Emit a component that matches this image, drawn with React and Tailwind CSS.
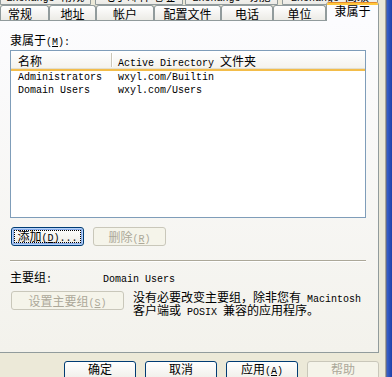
import React from 'react';

// ASCII runs: the old dialog font draws latin letters 6px wide
const A = ({ children }) => (
  <span className="font-['Liberation_Mono',monospace] text-[10px] leading-[8px]">{children}</span>
);

const BackTab = ({ w, ml = '', children }) => (
  <div
    className={`${w} ${ml} h-[18px] shrink-0 flex justify-center border border-[#919b9c] rounded-t-[3px] bg-linear-to-b from-white to-[#ecebe6] leading-[14px] pt-[1px]`}>
    <span>{children}</span>
  </div>
);

const Tab = ({ w, start, children }) => (
  <div
    className={`${w} h-[15px] shrink-0 flex ${start ? 'justify-start pl-[7px]' : 'justify-center'} border border-b-0 border-[#919b9c] rounded-t-[3px] bg-linear-to-b from-white to-[#ecebe6] leading-[14px] pt-[1px]`}>
    {children}
  </div>
);

const Button = ({ w = 'w-[73px]', h = 'h-[19px]', disabled, focused, top, children }) => {
  if (disabled) {
    return (
      <div
        className={`${w} ${h} shrink-0 flex justify-center ${top ? 'items-start' : 'items-center'} border border-[#c9c7ba] rounded-[3px] bg-[#f5f4ea] text-[#aca899] leading-[14px]`}>
        <span>{children}</span>
      </div>
    );
  }
  if (focused) {
    return (
      <div
        className={`${w} ${h} shrink-0 flex p-[2px] border border-[#003c74] rounded-[3px] bg-linear-to-b from-white to-[#ecebe4] shadow-[inset_0_0_0_1px_#b8d2f7,inset_0_0_0_2px_#89adec]`}>
        <div className="flex-1 flex items-center justify-center border border-dotted border-black leading-[12px]">
          <span>{children}</span>
        </div>
      </div>
    );
  }
  return (
    <div
      className={`${w} ${h} shrink-0 flex justify-center ${top ? 'items-start' : 'items-center'} border border-[#003c74] rounded-[3px] bg-linear-to-b from-white to-[#ecebe4] shadow-[inset_0_-2px_0_#dcd8cc] leading-[14px]`}>
      <span>{children}</span>
    </div>
  );
};

const members = [
  { name: 'Administrators', folder: 'wxyl.com/Builtin' },
  { name: 'Domain Users', folder: 'wxyl.com/Users' },
];

export default function App() {
  return (
    <div className="w-[392px] h-[377px] overflow-hidden flex bg-[#ece9d8] text-black text-[12px] font-['Noto_Sans_CJK_SC',sans-serif]">
      <div className="w-[379px] shrink-0 flex flex-col">
        {/* back row of tabs, almost hidden */}
        <div className="h-[5px] shrink-0 overflow-hidden flex items-end">
          <BackTab w="w-[91px]">
            <A>Exchange </A>常规
          </BackTab>
          <BackTab w="w-[88px]" ml="ml-[4px]">
            电子邮件地址
          </BackTab>
          <BackTab w="w-[93px]" ml="ml-[2px]">
            <A>Exchange </A>功能
          </BackTab>
          <BackTab w="w-[96px]" ml="ml-[4px]">
            <A>Exchange </A>高级
          </BackTab>
        </div>

        {/* front row */}
        <div className="h-[15px] shrink-0 flex items-end">
          <Tab w="w-[49px]" start>
            常规
          </Tab>
          <Tab w="w-[47px]">地址</Tab>
          <Tab w="w-[58px]">帐户</Tab>
          <Tab w="w-[67px]">配置文件</Tab>
          <Tab w="w-[52px]">电话</Tab>
          <Tab w="w-[53px]">单位</Tab>
          <div className="w-[53px] h-[19px] -mb-[1px] shrink-0 relative z-10 flex flex-col border-x border-[#919b9c] rounded-t-[3px] overflow-hidden bg-[#fcfcfe]">
            <div className="h-[1px] bg-[#e68b2c]" />
            <div className="h-[2px] bg-[#ffc73c]" />
            <div className="flex justify-center leading-[12px]">隶属于</div>
          </div>
        </div>

        {/* tab page */}
        <div className="h-[333px] shrink-0 flex flex-col pl-[10px] border-y border-r border-[#919b9c] bg-linear-to-b from-[#fcfcfe] to-[#f3f2ec]">
          <div className="mt-[12px] leading-[14px]">
            隶属于
            <A>
              (<u>M</u>):
            </A>
          </div>

          <div className="mt-[3px] w-[356px] h-[168px] shrink-0 flex flex-col border border-[#7f9db9] bg-white">
            <div className="h-[18px] shrink-0 flex border-b border-[#e2dece] bg-linear-to-b from-white to-[#f4f3ee] leading-[12px]">
              <div className="w-[100px] pl-[7px] pt-[4px]">名称</div>
              <div className="w-[1px] mt-[2px] mb-[1px] bg-[#cbc7b8]" />
              <div className="w-[1px] mt-[2px] mb-[1px] bg-white" />
              <div className="flex-1 pl-[5px] pt-[4px]">
                <A>Active Directory </A>文件夹
              </div>
            </div>
            <div className="h-[2px] shrink-0 bg-[#f3bd4a]" />
            {members.map(m => (
              <div
                key={m.name}
                className="h-[13px] flex font-['Liberation_Mono',monospace] text-[10px] leading-[13px]">
                <div className="w-[102px] pl-[7px]">{m.name}</div>
                <div className="pl-[5px]">{m.folder}</div>
              </div>
            ))}
          </div>

          <div className="mt-[9px] ml-[1px] flex gap-[9px]">
            <Button focused>
              添加
              <A>
                (<u>D</u>)...
              </A>
            </Button>
            <Button disabled>
              删除
              <A>
                (<u>R</u>)
              </A>
            </Button>
          </div>

          <div className="mt-[14px] w-[356px] h-[1px] bg-[#aca899]" />
          <div className="w-[356px] h-[1px] bg-white" />

          <div className="mt-[8px] flex leading-[14px]">
            <div className="w-[93px]">
              主要组<A>:</A>
            </div>
            <div>
              <A>Domain Users</A>
            </div>
          </div>

          <div className="mt-[7px] ml-[1px] flex items-start">
            <Button w="w-[113px]" disabled>
              设置主要组
              <A>
                (<u>S</u>)
              </A>
            </Button>
            <div className="ml-[9px] leading-[11px]">
              <div>
                没有必要改变主要组，除非您有<A> Macintosh</A>
              </div>
              <div>
                客户端或<A> POSIX </A>兼容的应用程序。
              </div>
            </div>
          </div>
        </div>

        {/* dialog buttons */}
        <div className="mt-[8px] pl-[64px] flex gap-[9px]">
          <Button w="w-[72px]" h="h-[23px]" top>
            确定
          </Button>
          <Button w="w-[72px]" h="h-[23px]" top>
            取消
          </Button>
          <Button w="w-[72px]" h="h-[23px]" top>
            应用
            <A>
              (<u>A</u>)
            </A>
          </Button>
          <Button w="w-[72px]" h="h-[23px]" disabled top>
            帮助
          </Button>
        </div>
      </div>

      {/* window frame on the right */}
      <div className="w-[6px] shrink-0 bg-[#ece9d8]" />
      <div className="w-[1px] shrink-0 bg-[#aca899]" />
      <div className="w-[1px] shrink-0 bg-[#5a6a9a]" />
      <div className="w-[5px] shrink-0 bg-linear-to-r from-[#3a62c8] to-[#1c3fa8]" />
    </div>
  );
}
